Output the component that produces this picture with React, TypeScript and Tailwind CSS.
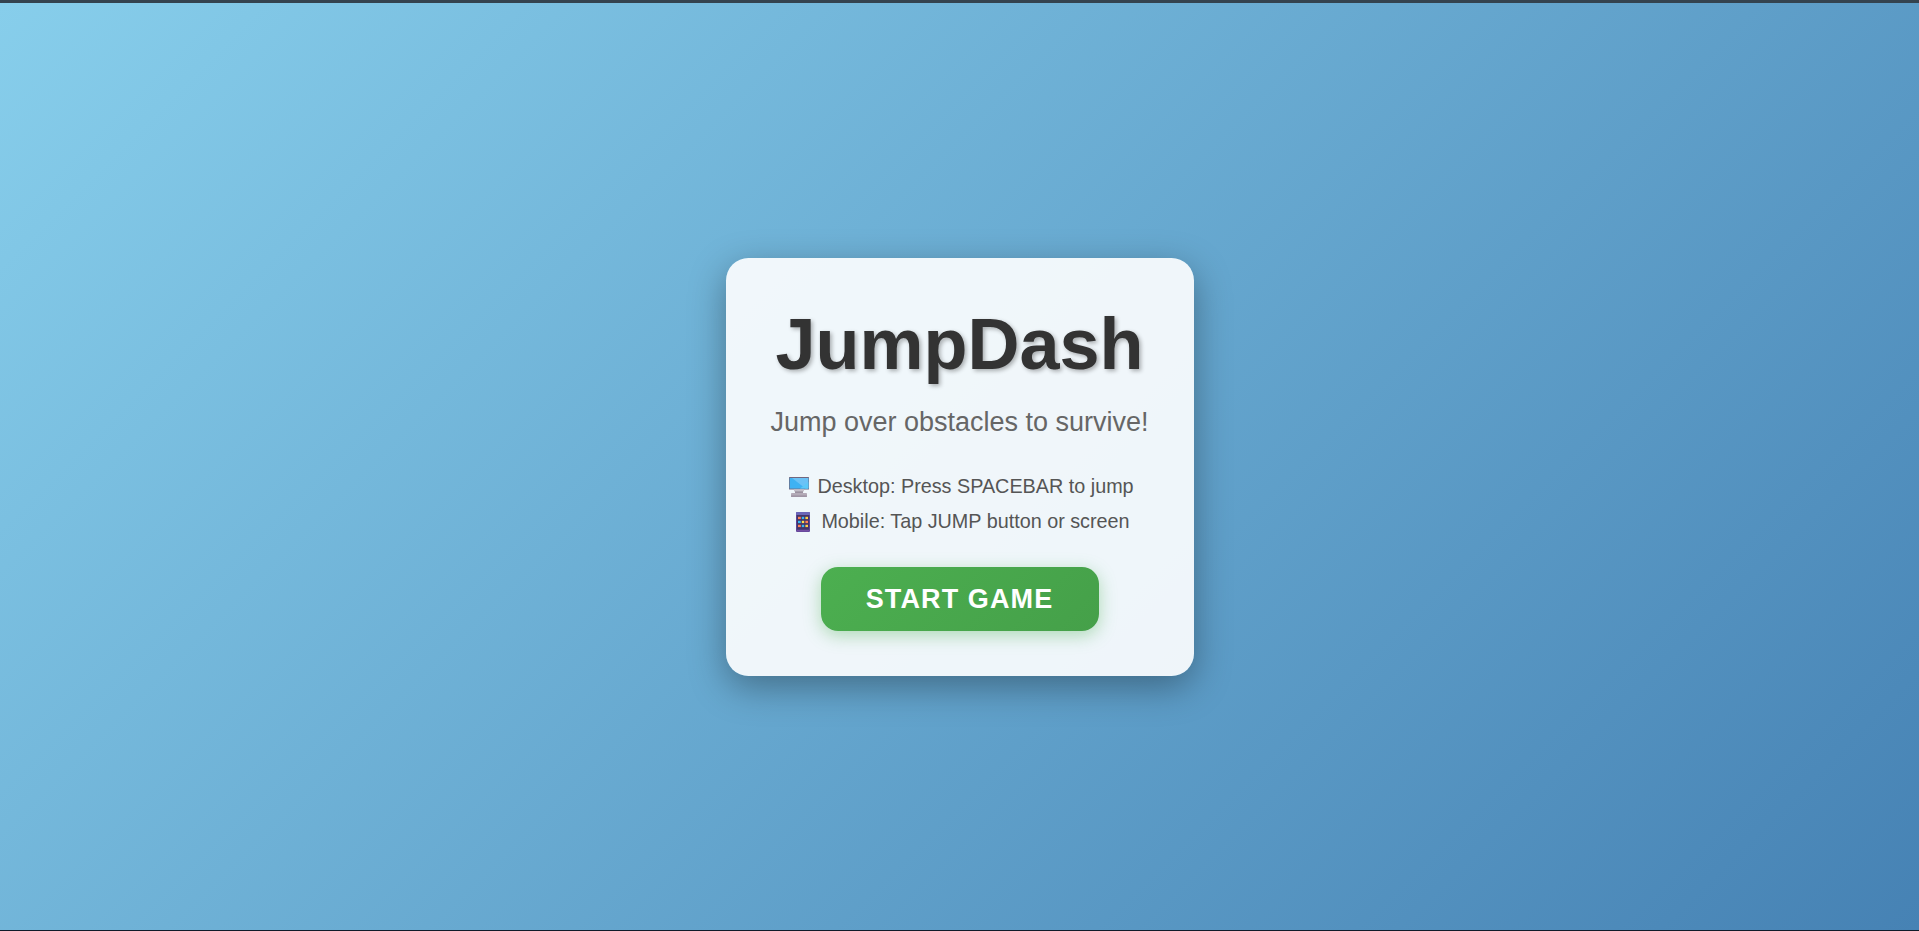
import React from 'react';

interface IconProps {
  className?: string;
}

const DesktopIcon: React.FC<IconProps> = ({ className }) => (
  <svg className={className} viewBox="0 0 20 20">
    <rect x="0" y="0" width="20" height="12.4" rx="0.5" fill="#71677f" />
    <rect x="0.7" y="1" width="18.6" height="10.6" fill="#3eb2f3" />
    <path d="M3 1H19.3V11.6H16.5Z" fill="#6bc2f6" />
    <path d="M19.3 5V11.6H11Z" fill="#5cc8f8" />
    <rect x="5" y="12.4" width="10" height="2" fill="#c3bec8" />
    <rect x="6" y="14.2" width="8" height="2" fill="#9b92a0" />
    <rect x="2" y="16" width="16" height="4" rx="0.8" fill="#b4abb8" />
    <rect x="2" y="18.4" width="16" height="1.4" rx="0.6" fill="#998f9e" />
  </svg>
);

const MobileIcon: React.FC<IconProps> = ({ className }) => (
  <svg className={className} viewBox="0 0 14 20">
    <rect width="14" height="20" rx="1.2" fill="#5b4496" />
    <path d="M1.2 0H12.8A1.2 1.2 0 0 1 14 1.2V3H0V1.2A1.2 1.2 0 0 1 1.2 0Z" fill="#6a66b8" />
    <rect x="1" y="3" width="12" height="14.5" fill="#433567" />
    <rect x="2" y="4.8" width="2.8" height="2.3" fill="#ff8257" />
    <rect x="5.8" y="4.8" width="2.4" height="2.3" fill="#35b8f5" />
    <rect x="9.4" y="4.8" width="2.6" height="2.3" fill="#ffd04a" />
    <rect x="2" y="8.8" width="2.8" height="2.3" fill="#35b8f5" />
    <rect x="5.8" y="8.8" width="2.4" height="2.3" fill="#ffe04a" />
    <rect x="9.4" y="8.8" width="2.6" height="2.3" fill="#ff8257" />
    <rect x="2" y="12.8" width="2.8" height="2.3" fill="#ff8257" />
    <rect x="5.8" y="12.8" width="2.4" height="2.3" fill="#35b8f5" />
    <rect x="9.4" y="12.8" width="2.6" height="2.3" fill="#ffd04a" />
    <rect x="0.5" y="18" width="13" height="1.5" rx="0.7" fill="#7650a4" />
  </svg>
);

interface StartScreenProps {
  onStart: () => void;
}

const StartScreen: React.FC<StartScreenProps> = ({ onStart }) => {
  return (
    <div className="flex h-[418px] w-[468px] flex-col items-center rounded-[22.5px] bg-white/90 pt-[45px] text-center shadow-[0_11px_36px_rgba(0,0,0,0.34)]">
      <h1 className="text-[72px] leading-[83px] font-bold text-[#333] [text-shadow:2px_2px_4px_rgba(0,0,0,0.3)]">
        JumpDash
      </h1>
      <p className="mt-5 text-[27px] leading-8 whitespace-nowrap text-[#666]">
        Jump over obstacles to survive!
      </p>
      <div className="mt-[31px] text-[19.8px] leading-[35px] whitespace-nowrap text-[#555]">
        <p className="flex items-center justify-center">
          <DesktopIcon className="mr-[8.5px] ml-[3.5px] h-5 w-5" />
          Desktop: Press SPACEBAR to jump
        </p>
        <p className="flex items-center justify-center">
          <MobileIcon className="mr-[11.5px] ml-[6.5px] h-5 w-3.5" />
          Mobile: Tap JUMP button or screen
        </p>
      </div>
      <button
        onClick={onStart}
        className="mt-7 h-16 w-[278px] cursor-pointer rounded-[17px] bg-[linear-gradient(135deg,#4caf50,#45a049)] text-[27px] leading-8 font-bold tracking-[1.1px] text-white uppercase shadow-[0_4.5px_17px_rgba(76,175,80,0.4)]"
      >
        Start Game
      </button>
    </div>
  );
};

export default function App() {
  const handleStart = () => {
    document.getElementById('game')?.focus();
  };

  return (
    <div className="flex h-screen flex-col overflow-hidden bg-[#101c2a] font-['Liberation_Sans',Arial,sans-serif]">
      <div className="h-[3px] shrink-0 bg-[#34434f]" />
      <main
        id="game"
        tabIndex={-1}
        className="flex flex-1 items-start justify-center bg-[linear-gradient(135deg,#87ceeb,#4682b4)] pt-[255px] outline-none"
      >
        <StartScreen onStart={handleStart} />
      </main>
      <div className="h-px shrink-0 bg-[#101c2a]" />
    </div>
  );
}
